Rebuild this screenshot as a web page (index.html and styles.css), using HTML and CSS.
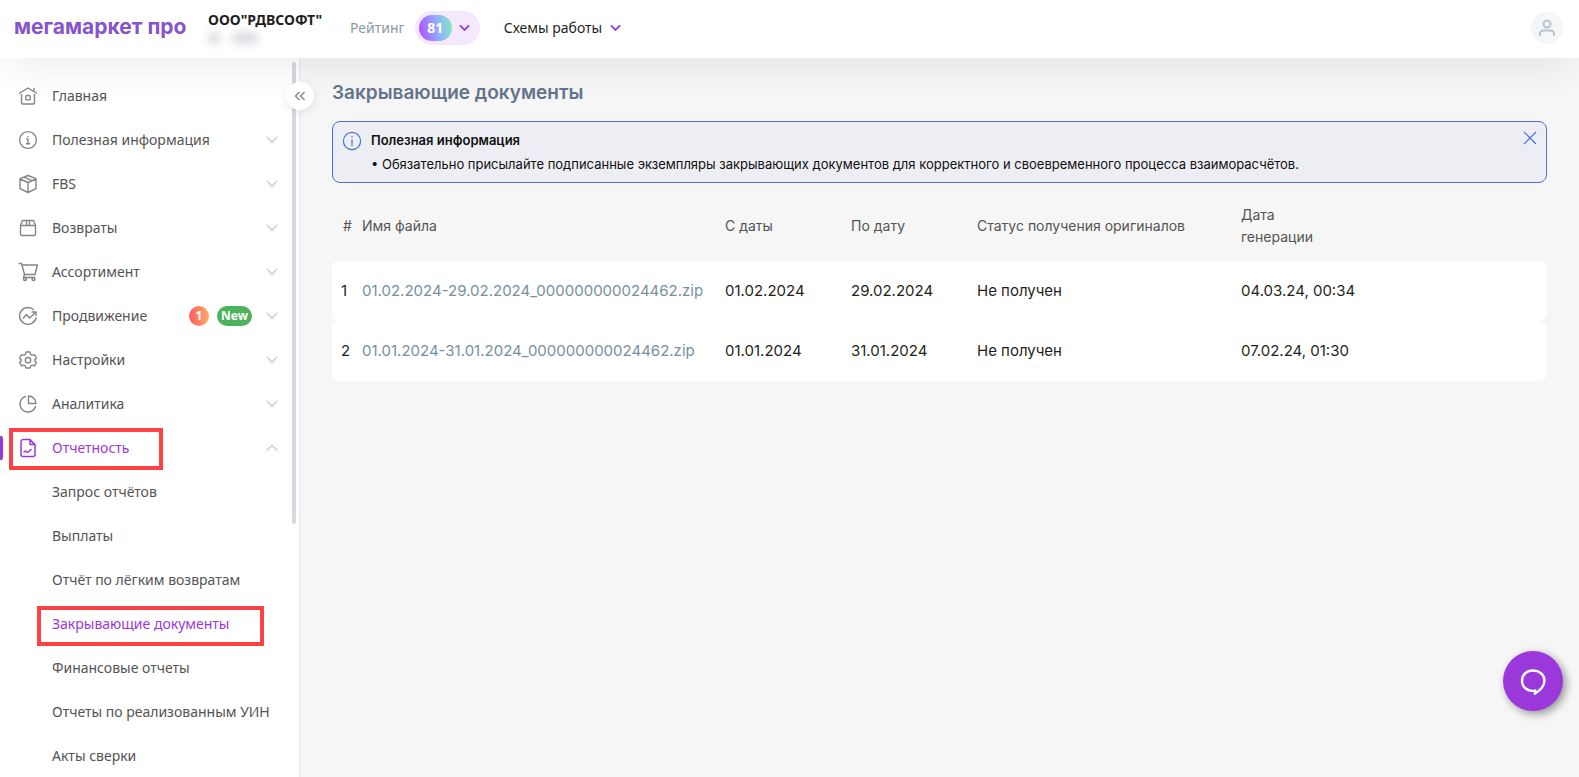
FILE: index.html
```html
<!DOCTYPE html>
<html lang="ru">
<head>
<meta charset="utf-8">
<meta name="viewport" content="width=device-width, initial-scale=1">
<title>Закрывающие документы</title>
<link rel="stylesheet" href="styles.css">
</head>
<body>
<svg class="defs" aria-hidden="true">
  <symbol id="down" viewBox="0 0 12 8"><path d="M1 1.2l5 5 5-5"/></symbol>
  <symbol id="up" viewBox="0 0 12 8"><path d="M1 6.4l5-5 5 5"/></symbol>
</svg>
<header class="header">
  <a class="logo" href="#">мегамаркет про</a>
  <div class="company">
    <strong class="company-name">ООО"РДВСОФТ"</strong>
    <span class="company-id"><i class="smudge smudge-short"></i><i class="smudge"></i></span>
  </div>
  <span class="rating-label">Рейтинг</span>
  <button class="rating" type="button"><span class="score">81</span><svg class="chevron"><use href="#down"/></svg></button>
  <button class="schemes" type="button">Схемы работы<svg class="chevron"><use href="#down"/></svg></button>
  <button class="user" type="button" aria-label="Профиль"><svg width="18" height="18" viewBox="0 0 18 18"><circle cx="9" cy="5" r="3.5"/><path d="M2 17v-2a3.500 3.500 0 0 1 3.500-3.500h7A3.500 3.500 0 0 1 16 15v2"/></svg></button>
</header>
<div class="layout">
  <aside class="sidebar">
    <nav class="nav">
      <a class="item" href="#"><svg class="icon" viewBox="0 0 20 20"><path d="M1 7.500l9-5.500 9 5.500M16 5V2M3.500 8v8.500A1.500 1.500 0 0 0 5 18h10a1.500 1.500 0 0 0 1.500-1.500V8"/><rect x="7.800" y="9.500" width="4.400" height="4.400" rx="1"/></svg><span class="label">Главная</span></a>
      <a class="item" href="#"><svg class="icon" viewBox="0 0 20 20"><circle cx="10" cy="10" r="8.400"/><path d="M8.300 9H10v4.500M8 13.700h4.200M9.800 6v1.300"/></svg><span class="label">Полезная информация</span><svg class="arrow"><use href="#down"/></svg></a>
      <a class="item" href="#"><svg class="icon" viewBox="0 0 20 20"><path d="M10 1.500l8 3.200v10L10 18.500l-8-3.800v-10zM2 5l8 3.500L18 5M10 8.500v10M6 3.200l8 3.500"/></svg><span class="label">FBS</span><svg class="arrow"><use href="#down"/></svg></a>
      <a class="item" href="#"><svg class="icon" viewBox="0 0 20 20"><path d="M2.500 7.500L4.500 2.500h11l2 5v8.500a1.500 1.500 0 0 1-1.500 1.500H4A1.500 1.500 0 0 1 2.500 16zM2.500 7.500h15M8.500 2.500v5M11.500 2.500v5"/></svg><span class="label">Возвраты</span><svg class="arrow"><use href="#down"/></svg></a>
      <a class="item" href="#"><svg class="icon" viewBox="0 0 20 20"><path d="M0.500 1.500h3L6.500 12.500h10.500l2.300-9.500H4M6.500 12.500l-1 3h11.500"/><circle cx="7" cy="17" r="1.500"/><circle cx="15.500" cy="17" r="1.500"/></svg><span class="label">Ассортимент</span><svg class="arrow"><use href="#down"/></svg></a>
      <a class="item" href="#"><svg class="icon" viewBox="0 0 20 20"><path d="M16 4A8.400 8.400 0 1 0 18.200 11.500M5 12.500l3.500-4 3 3.500L18 6M13.500 6H18v4.200"/></svg><span class="label">Продвижение</span><span class="badge count">1</span><span class="badge new">New</span><svg class="arrow"><use href="#down"/></svg></a>
      <a class="item" href="#"><svg class="icon" viewBox="0 0 20 20"><path d="M8 2h4l.6 2.400 1.600.9 2.300-.7 2 3.400-1.700 1.700v1l1.700 1.700-2 3.400-2.300-.7-1.600.9L12 18H8l-.6-2-1.600-.9-2.300.7-2-3.400 1.700-1.700v-1L1.500 8l2-3.400 2.300.7 1.600-.9z"/><circle cx="10" cy="10.200" r="2.700"/></svg><span class="label">Настройки</span><svg class="arrow"><use href="#down"/></svg></a>
      <a class="item" href="#"><svg class="icon" viewBox="0 0 20 20"><path d="M8 2.300a8 8 0 1 0 9.700 9.700M10.500 2v7.500H18A7.500 7.500 0 0 0 10.500 2z"/></svg><span class="label">Аналитика</span><svg class="arrow"><use href="#down"/></svg></a>
      <a class="item current marked" href="#"><svg class="icon" viewBox="0 0 20 20"><path d="M12 1.600H5A2 2 0 0 0 3 3.600v12.800a2 2 0 0 0 2 2h10a2 2 0 0 0 2-2V6.600zM12 1.600v5h5M5.500 14.500l2-1.500 2 1.500 4-3.500"/></svg><span class="label">Отчетность</span><svg class="arrow"><use href="#up"/></svg></a>
      <a class="item sub" href="#">Запрос отчётов</a>
      <a class="item sub" href="#">Выплаты</a>
      <a class="item sub" href="#">Отчёт по лёгким возвратам</a>
      <a class="item sub active marked" href="#">Закрывающие документы</a>
      <a class="item sub" href="#">Финансовые отчеты</a>
      <a class="item sub" href="#">Отчеты по реализованным УИН</a>
      <a class="item sub" href="#">Акты сверки</a>
    </nav>
    <div class="thumb"></div>
    <button class="collapse" type="button" aria-label="Свернуть меню"><svg width="12" height="10" viewBox="0 0 12 10"><path d="M5.500 1l-4 4 4 4M10.500 1l-4 4 4 4"/></svg></button>
  </aside>
  <main class="main">
    <h1 class="title">Закрывающие документы</h1>
    <section class="notice">
      <svg class="notice-icon" viewBox="0 0 20 20"><circle cx="10" cy="10" r="8.600"/><path d="M10 8.300V15M10 5v1.600"/></svg>
      <div class="notice-text">
        <h2 class="notice-title">Полезная информация</h2>
        <p class="notice-body">• Обязательно присылайте подписанные экземпляры закрывающих документов для корректного и своевременного процесса взаиморасчётов.</p>
      </div>
      <button class="close" type="button" aria-label="Закрыть"><svg width="14" height="14" viewBox="0 0 14 14"><path d="M1 1l12 12M13 1L1 13"/></svg></button>
    </section>
    <table class="docs">
      <colgroup><col class="c-num"><col class="c-file"><col class="c-date"><col class="c-date"><col class="c-status"><col></colgroup>
      <thead><tr><th class="num">#</th><th>Имя файла</th><th>С даты</th><th>По дату</th><th>Статус получения оригиналов</th><th>Дата<br>генерации</th></tr></thead>
      <tbody>
        <tr><td class="num">1</td><td><a class="file" href="#">01.02.2024-29.02.2024_000000000024462.zip</a></td><td>01.02.2024</td><td>29.02.2024</td><td>Не получен</td><td>04.03.24, 00:34</td></tr>
        <tr><td class="num">2</td><td><a class="file" href="#">01.01.2024-31.01.2024_000000000024462.zip</a></td><td>01.01.2024</td><td>31.01.2024</td><td>Не получен</td><td>07.02.24, 01:30</td></tr>
      </tbody>
    </table>
  </main>
</div>
<button class="chat" type="button" aria-label="Чат"><svg width="28" height="28" viewBox="0 0 28 28"><path d="M16 23.600C8.500 25 3 20 3 13.500 3 7.500 8 3.500 14 3.500s11.500 4 11.500 10c0 5.500-4.500 10-9.500 13z"/></svg></button>
</body>
</html>
```
FILE: styles.css
```css
*, *::before, *::after { box-sizing: border-box; }
body {
  margin: 0;
  height: 100vh;
  overflow: hidden;
  display: flex;
  flex-direction: column;
  background: #f6f6f6;
  color: #1f1f22;
  font: 14px/20px "Noto Sans", sans-serif;
}
button { border: 0; padding: 0; background: none; font: inherit; color: inherit; cursor: pointer; }
a { color: inherit; text-decoration: none; }
svg { fill: none; stroke: currentColor; flex: none; }
.defs { position: absolute; width: 0; height: 0; }

.header {
  position: relative;
  z-index: 2;
  flex: none;
  display: flex;
  align-items: center;
  height: 58px;
  padding: 0 16px 2px 14px;
  background: #fff;
  box-shadow: 0 16px 36px -8px rgba(0, 0, 0, 0.08);
}
.logo { width: 194px; padding-bottom: 2px; font: 700 21px/28px Inter, sans-serif; color: #8654cc; white-space: nowrap; }
.company { width: 142px; display: flex; flex-direction: column; height: 36px; }
.company-name { font-weight: 700; font-size: 14px; white-space: nowrap; }
.company-id { display: flex; gap: 12px; padding-top: 2px; }
.smudge { width: 26px; height: 12px; border-radius: 4px; background: #dcdde2; filter: blur(4px); }
.smudge-short { width: 12px; }
.rating-label { color: #91979f; }
.rating {
  display: flex;
  align-items: center;
  gap: 7px;
  height: 34px;
  margin: 0 24px 0 10px;
  padding: 0 10px 0 4px;
  border-radius: 17px;
  background: #f4e8fc;
}
.score {
  width: 33px;
  border-radius: 13px;
  background: linear-gradient(80deg, #ac5cff 10%, #8fb4fa 60%, #83efb2 100%);
  color: #fff;
  font-weight: 700;
  line-height: 26px;
}
.chevron { width: 11px; height: 8px; color: #9b38dc; stroke-width: 2; }
.schemes { display: flex; align-items: center; gap: 8px; }
.user {
  display: grid;
  place-items: center;
  width: 32px;
  height: 32px;
  margin-left: auto;
  border-radius: 50%;
  background: #f4f6f8;
  color: #b8c5cc;
  stroke-width: 2;
}

.layout { flex: 1; min-height: 0; display: flex; }
.sidebar { position: relative; flex: none; width: 300px; background: #fff; border-right: 1px solid #e9e9eb; }
.nav { height: 100%; overflow: hidden; padding-top: 16px; }
.item {
  position: relative;
  display: flex;
  align-items: center;
  height: 44px;
  padding: 0 21px 0 18px;
  color: #545454;
  white-space: nowrap;
}
.icon { width: 20px; height: 20px; margin-right: 14px; color: #858585; stroke-width: 1.4; stroke-linejoin: round; }
.label { flex: 1; }
.arrow { width: 12px; height: 8px; color: #d4d4d4; stroke-width: 1.8; }
.sub { padding-left: 52px; }
.badge { border-radius: 10px; color: #fff; font-weight: 700; font-size: 12px; line-height: 20px; text-align: center; }
.count { width: 20px; margin-right: 8px; background: linear-gradient(90deg, #ff5c5f, #ffae69); }
.new { width: 35px; margin-right: 14px; background: #4db25e; }
.current, .current .icon, .active { color: #9b38dc; }
.current .icon { stroke-width: 1.5; }
.current::before {
  content: "";
  position: absolute;
  left: 0;
  top: 10px;
  width: 3px;
  height: 24px;
  border-radius: 0 2px 2px 0;
  background: #9b38dc;
}
.marked::after { content: ""; position: absolute; border: 4px solid #fe4143; }
.current::after { left: 9px; top: 2px; width: 154px; height: 42px; }
.active::after { left: 37px; top: 4px; width: 227px; height: 40px; }
.thumb { position: absolute; right: 3px; top: 4px; width: 4px; height: 462px; border-radius: 2px; background: #d5d9e2; }
.collapse {
  position: absolute;
  z-index: 3;
  right: -15px;
  top: 24px;
  display: grid;
  place-items: center;
  width: 28px;
  height: 28px;
  border-radius: 50%;
  background: #fff;
  color: #858585;
  stroke-width: 1.4;
  box-shadow: 0 2px 8px rgba(0, 0, 0, 0.1);
}

.main { flex: 1; min-width: 0; padding: 20px 32px; font-family: Inter, sans-serif; font-size: 15px; }
.title { margin: 0 0 13px; font-size: 19px; line-height: 30px; font-weight: 600; color: #64748b; }
.notice {
  display: flex;
  align-items: flex-start;
  padding: 6px 9px;
  border: 1px solid #4a72d4;
  border-radius: 8px;
  background: #edeef3;
  color: #111;
  font-size: 13px;
  line-height: 24px;
}
.notice-icon { width: 20px; height: 20px; margin: 3px 9px 0 0; color: #4a72d4; stroke-width: 1.2; }
.notice-text { flex: 1; }
.notice-title { margin: 0; font-size: 13px; font-weight: 600; line-height: 24px; }
.notice-body { margin: 0; }
.close { display: flex; margin-top: 3px; color: #4a72d4; stroke-width: 1.2; }
.docs { width: 100%; margin-top: 16px; border-collapse: separate; border-spacing: 0; table-layout: fixed; }
.c-num { width: 26px; }
.c-file { width: 363px; }
.c-date { width: 126px; }
.c-status { width: 264px; }
th { height: 62px; padding: 0 0 8px 4px; font-size: 14px; line-height: 22px; font-weight: 400; color: #545454; text-align: left; }
td { height: 60px; padding: 0 0 0 4px; background: #fff; white-space: nowrap; }
th.num { padding-left: 11px; }
td.num { padding-left: 9px; }
td:first-child { border-radius: 6px 0 0 6px; }
td:last-child { border-radius: 0 8px 8px 0; }
.file { color: #78909c; }

.chat {
  position: fixed;
  z-index: 4;
  right: 16px;
  bottom: 66px;
  display: grid;
  place-items: center;
  width: 60px;
  height: 60px;
  border-radius: 50%;
  background: #9b38dc;
  color: #fff;
  stroke-width: 2.4;
  box-shadow: 3px 3px 8px rgba(0, 0, 0, 0.4);
}
```
